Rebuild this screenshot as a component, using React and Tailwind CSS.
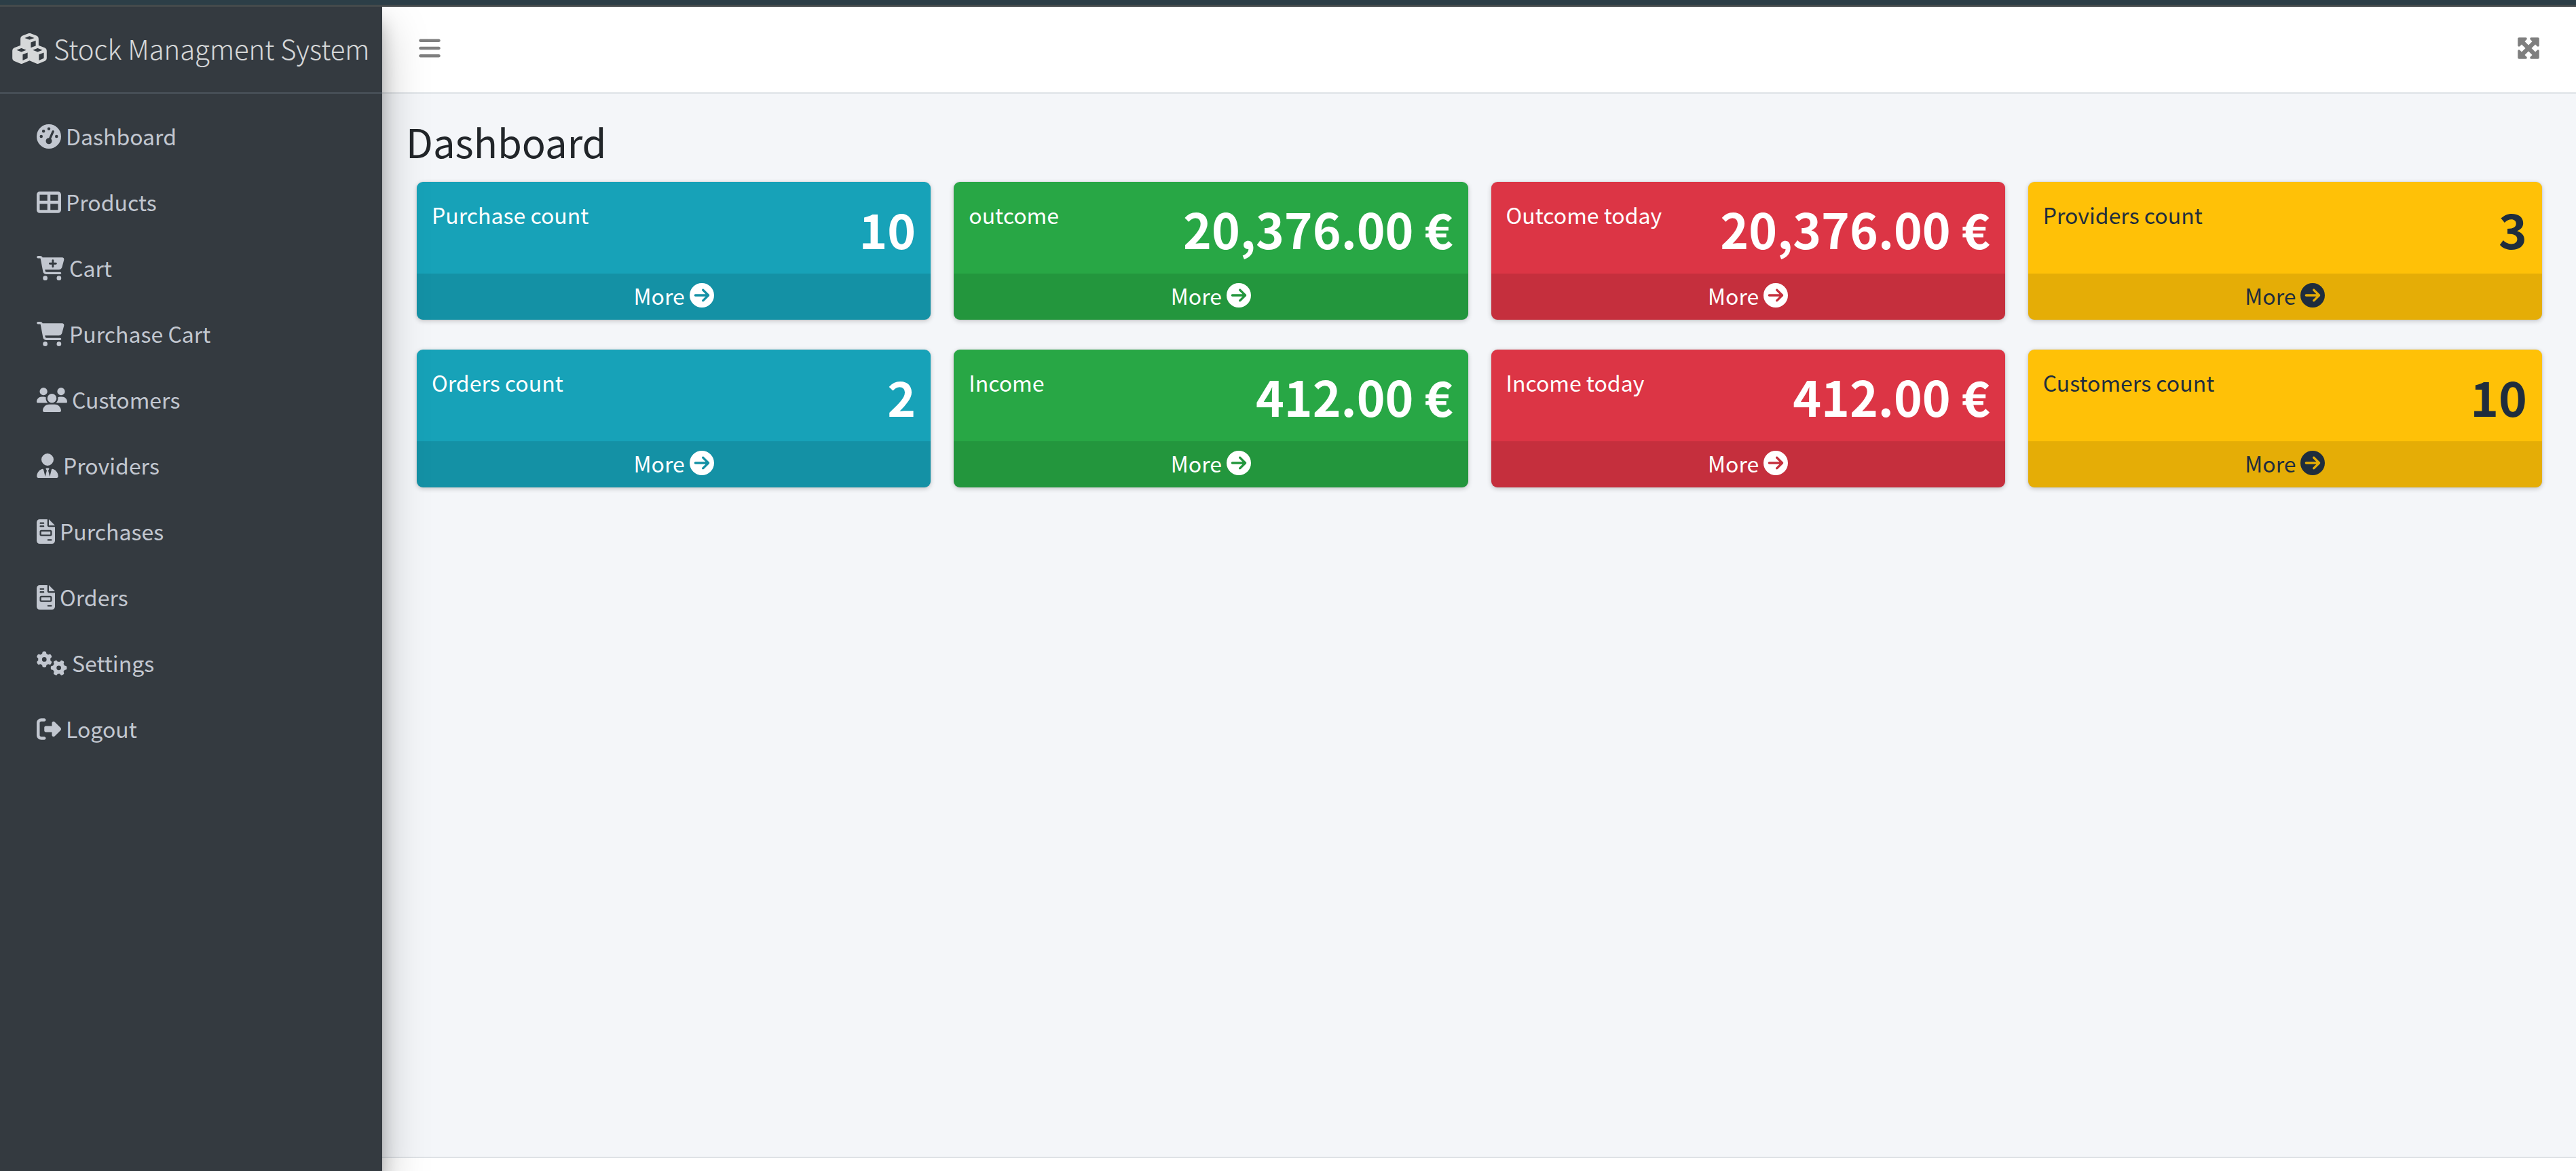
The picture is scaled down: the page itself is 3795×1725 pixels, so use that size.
import {
  FaBars,
  FaCartPlus,
  FaCartShopping,
  FaCircleArrowRight,
  FaCubes,
  FaFileInvoice,
  FaGaugeHigh,
  FaGears,
  FaMaximize,
  FaRightFromBracket,
  FaTableCellsLarge,
  FaUsers,
  FaUserTie,
} from 'react-icons/fa6';

const navItems = [
  { label: 'Dashboard', Icon: FaGaugeHigh, size: 'w-9' },
  { label: 'Products', Icon: FaTableCellsLarge, size: 'w-9' },
  { label: 'Cart', Icon: FaCartPlus, size: 'w-[41px]' },
  { label: 'Purchase Cart', Icon: FaCartShopping, size: 'w-[41px]' },
  { label: 'Customers', Icon: FaUsers, size: 'w-[45px]' },
  { label: 'Providers', Icon: FaUserTie, size: 'w-8' },
  { label: 'Purchases', Icon: FaFileInvoice, size: 'w-[27px]' },
  { label: 'Orders', Icon: FaFileInvoice, size: 'w-[27px]' },
  { label: 'Settings', Icon: FaGears, size: 'w-[45px]' },
  { label: 'Logout', Icon: FaRightFromBracket, size: 'w-9' },
];

const tones = {
  info: 'bg-[#17a2b8] text-white',
  success: 'bg-[#28a745] text-white',
  danger: 'bg-[#dc3545] text-white',
  warning: 'bg-[#ffc107] text-[#1f2d3d]',
};

const cards = [
  { label: 'Purchase count', value: '10', tone: 'info' },
  { label: 'outcome', value: '20,376.00 €', tone: 'success' },
  { label: 'Outcome today', value: '20,376.00 €', tone: 'danger' },
  { label: 'Providers count', value: '3', tone: 'warning' },
  { label: 'Orders count', value: '2', tone: 'info' },
  { label: 'Income', value: '412.00 €', tone: 'success' },
  { label: 'Income today', value: '412.00 €', tone: 'danger' },
  { label: 'Customers count', value: '10', tone: 'warning' },
];

function Sidebar() {
  return (
    <aside className="z-10 w-[563px] shrink-0 bg-[#343a40] shadow-[0_32px_63px_rgba(0,0,0,0.25),0_23px_23px_rgba(0,0,0,0.22)]">
      <a
        href="#home"
        className="flex h-32 items-center gap-[10px] border-b-2 border-[#4b545c] pb-1 pl-[18px] text-[40px] leading-none font-light whitespace-nowrap text-white/80"
      >
        <FaCubes className="h-[45px] w-[51px] shrink-0" />
        Stock Managment System
      </a>
      <nav className="pt-[14px]">
        <ul>
          {navItems.map(({ label, Icon, size }) => (
            <li key={label}>
              <a
                href={'#' + label.toLowerCase().replace(' ', '-')}
                className="flex h-[97px] items-center gap-[7px] pl-[54px] text-[32px] leading-none text-[#c2c7d0]"
              >
                <Icon className={'h-9 shrink-0 ' + size} />
                <span className="pb-[2px]">{label}</span>
              </a>
            </li>
          ))}
        </ul>
      </nav>
    </aside>
  );
}

function StatCard({ label, value, tone }) {
  return (
    <article
      className={
        'overflow-hidden rounded-[9px] shadow-[0_0_2px_rgba(0,0,0,0.13),0_2px_7px_rgba(0,0,0,0.2)] ' + tones[tone]
      }
    >
      <div className="flex h-[135px] items-start justify-between px-[22px] pt-[21px]">
        <p className="text-[32px] leading-[54px]">{label}</p>
        <p className="text-[71px] leading-[94px] font-bold whitespace-nowrap">{value}</p>
      </div>
      <a href="#more" className="flex h-[68px] items-center justify-center gap-[7px] bg-black/10 pb-1 text-[32px] leading-none">
        More
        <FaCircleArrowRight className="size-9" />
      </a>
    </article>
  );
}

export default function App() {
  return (
    <div className="flex min-h-screen flex-col overflow-x-hidden bg-[#f4f6f9] font-['Noto_Sans_CJK_SC','Noto_Sans',sans-serif] text-[#212529]">
      <div className="z-20 h-[10px] border-b-3 border-[#454a4c] bg-[#2c3e47]" />
      <div className="flex flex-1">
        <Sidebar />
        <div className="flex min-w-0 flex-1 flex-col">
          <header className="flex h-32 items-center justify-between border-b-2 border-[#dee2e6] bg-white pr-[52px] pl-[54px] pb-1 text-black/50">
            <button type="button" aria-label="Toggle sidebar">
              <FaBars className="h-9 w-8" />
            </button>
            <button type="button" aria-label="Fullscreen">
              <FaMaximize className="size-9" />
            </button>
          </header>
          <main className="flex-1 pr-[50px] pl-[51px]">
            <h1 className="-ml-4 pt-[31px] text-[58px] leading-[78px]">Dashboard</h1>
            <div className="mt-[21px] grid grid-cols-4 gap-x-[34px] gap-y-11">
              {cards.map((card) => (
                <StatCard key={card.label} {...card} />
              ))}
            </div>
          </main>
          <footer className="h-[21px] border-t-2 border-[#dee2e6] bg-white" />
        </div>
      </div>
    </div>
  );
}
